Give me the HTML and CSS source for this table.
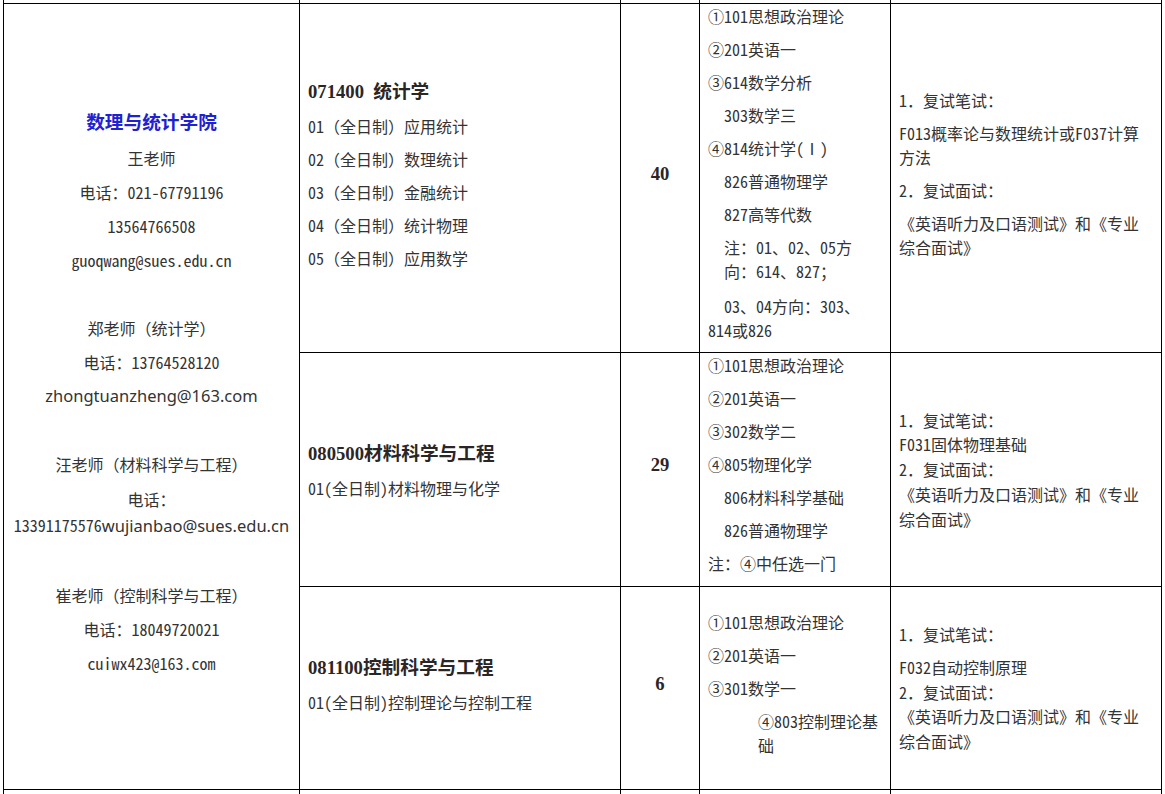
FILE: index.html
```html
<!DOCTYPE html>
<html lang="zh-CN">
<head>
<meta charset="utf-8">
<title>招生专业目录</title>
<link rel="stylesheet" href="styles.css">
</head>
<body>
<table class="grid">
  <colgroup>
    <col class="c1"><col class="c2"><col class="c3"><col class="c4"><col class="c5">
  </colgroup>
  <tr class="cut"><td></td><td></td><td></td><td></td><td></td></tr>
  <tr class="r1">
    <td rowspan="3" class="contact">
      <p class="dept">数理与统计学院</p>
      <p>王老师</p>
      <p>电话：021-67791196</p>
      <p>13564766508</p>
      <p>guoqwang@sues.edu.cn</p>
      <p class="blank">&nbsp;</p>
      <p>郑老师（统计学）</p>
      <p>电话：13764528120</p>
      <p class="yh">zhongtuanzheng@163.com</p>
      <p class="blank">&nbsp;</p>
      <p>汪老师（材料科学与工程）</p>
      <p class="two">电话：<br>13391175576<span class="yh">wujianbao@sues.edu.cn</span></p>
      <p class="blank">&nbsp;</p>
      <p>崔老师（控制科学与工程）</p>
      <p>电话：18049720021</p>
      <p>cuiwx423@163.com</p>
    </td>
    <td class="major">
      <p class="title"><span class="num">071400</span>&nbsp;&nbsp;统计学</p>
      <p>01（全日制）应用统计</p>
      <p>02（全日制）数理统计</p>
      <p>03（全日制）金融统计</p>
      <p>04（全日制）统计物理</p>
      <p>05（全日制）应用数学</p>
    </td>
    <td class="count"><p>40</p></td>
    <td class="exam top">
      <p>①101思想政治理论</p>
      <p>②201英语一</p>
      <p>③614数学分析</p>
      <p class="ind">303数学三</p>
      <p>④814统计学(Ⅰ)</p>
      <p class="ind">826普通物理学</p>
      <p class="ind">827高等代数</p>
      <p class="pad">注：01、02、05方向：614、827；</p>
      <p class="ind">03、04方向：303、814或826</p>
    </td>
    <td class="retest">
      <p>1．复试笔试：</p>
      <p>F013概率论与数理统计或F037计算方法</p>
      <p>2．复试面试：</p>
      <p>《英语听力及口语测试》和《专业综合面试》</p>
    </td>
  </tr>
  <tr class="r2">
    <td class="major">
      <p class="title"><span class="num">080500</span>材料科学与工程</p>
      <p class="last">01(全日制)材料物理与化学</p>
    </td>
    <td class="count"><p>29</p></td>
    <td class="exam top">
      <p>①101思想政治理论</p>
      <p>②201英语一</p>
      <p>③302数学二</p>
      <p>④805物理化学</p>
      <p class="ind">806材料科学基础</p>
      <p class="ind">826普通物理学</p>
      <p class="last">注：④中任选一门</p>
    </td>
    <td class="retest tight">
      <p>1．复试笔试：</p>
      <p>F031固体物理基础</p>
      <p>2．复试面试：</p>
      <p>《英语听力及口语测试》和《专业综合面试》</p>
    </td>
  </tr>
  <tr class="r3">
    <td class="major">
      <p class="title"><span class="num">081100</span>控制科学与工程</p>
      <p>01(全日制)控制理论与控制工程</p>
    </td>
    <td class="count"><p>6</p></td>
    <td class="exam">
      <p>①101思想政治理论</p>
      <p>②201英语一</p>
      <p>③301数学一</p>
      <p class="deep">④803控制理论基础</p>
    </td>
    <td class="retest tight">
      <p class="gap">1．复试笔试：</p>
      <p>F032自动控制原理</p>
      <p>2．复试面试：</p>
      <p>《英语听力及口语测试》和《专业综合面试》</p>
    </td>
  </tr>
  <tr class="tail"><td></td><td></td><td></td><td></td><td></td></tr>
</table>
</body>
</html>
```
FILE: styles.css
```css
html, body {
  margin: 0;
  padding: 0;
  background: #ffffff;
}

body {
  color: #333333;
  font-family: "Noto Sans Mono CJK SC", "Noto Sans CJK SC", sans-serif;
  font-size: 16px;
  line-height: 24px;
}

.grid {
  border-collapse: collapse;
  table-layout: fixed;
  width: 1159px;
  margin-left: 3px;
}

.c1 { width: 296px; }
.c2 { width: 321px; }
.c3 { width: 79px; }
.c4 { width: 191px; }
.c5 { width: 271px; }

.grid td {
  border: 1px solid #000000;
  padding: 0 8px;
  vertical-align: middle;
}

.grid p {
  margin: 0 0 9px;
  white-space: normal;
}

.cut td {
  border-top: none;
  height: 3px;
  padding: 0;
}

.r1 { height: 349px; }
.r2 { height: 234px; }
.r3 { height: 203px; }

.tail td {
  height: 20px;
  padding: 0;
}

/* contact column */
.contact {
  text-align: center;
}

.contact p {
  margin-bottom: 10px;
}

.contact .dept {
  color: #2121d4;
  font-family: "Liberation Serif", "Noto Sans CJK SC", serif;
  font-weight: bold;
  font-size: 18.67px;
  line-height: 28px;
  margin-bottom: 9px;
}

.contact .two {
  line-height: 26px;
}

.yh {
  font-family: "Noto Sans", "Noto Sans CJK SC", sans-serif;
  font-size: 16.5px;
}

/* major column */
.major {
  padding-left: 10px;
}

.major .title {
  font-family: "Liberation Serif", "Noto Sans CJK SC", serif;
  font-weight: bold;
  font-size: 18.67px;
  line-height: 28px;
  color: #2b2626;
  margin-bottom: 8px;
}

.major .last,
.exam .last {
  margin-bottom: 0;
}

/* count column */
.count {
  text-align: center;
  font-family: "Liberation Serif", serif;
  font-weight: bold;
  font-size: 18.67px;
  color: #2b2626;
}

/* exam subjects */
.grid .exam.top {
  vertical-align: top;
}

.exam .ind {
  text-indent: 1em;
}

.grid .exam .pad {
  padding-left: 1em;
  margin-bottom: 11px;
}

.exam .deep {
  padding-left: 50px;
}

/* retest column */
.retest.tight p {
  margin: 0;
  line-height: 24.75px;
}

.retest.tight .gap {
  margin-bottom: 8px;
}
```
